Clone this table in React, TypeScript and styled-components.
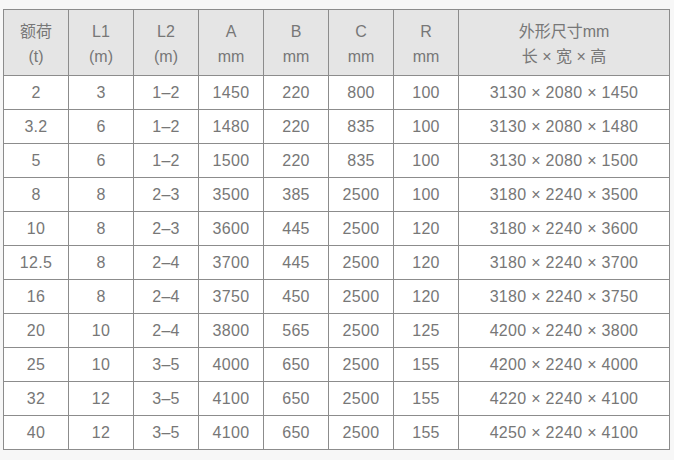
import React from 'react';
import styled, {createGlobalStyle} from 'styled-components';

const GlobalStyle = createGlobalStyle`
    html, body {
        margin: 0;
        padding: 0;
        background: #f7f7f7;
    }
`;

const Page = styled.div`
    width: 674px;
    height: 460px;
    padding: 9px 0 0 3px;
    box-sizing: border-box;
    font-family: "Liberation Sans", "Noto Sans CJK SC", sans-serif;
    color: #777;
`;

const Table = styled.table`
    border-collapse: collapse;
    table-layout: fixed;
    width: 666px;
    background: #fff;
    font-size: 16px;
`;

const HeadCell = styled.th`
    height: 62px;
    padding: 3px 0 0;
    border: 1px solid #8c8c8c;
    background: #e5e5e5;
    font-weight: normal;
    text-align: center;
    line-height: 25px;
    vertical-align: middle;
`;

const Cell = styled.td`
    height: 33px;
    padding: 0;
    border: 1px solid #8c8c8c;
    text-align: center;
    vertical-align: middle;
    letter-spacing: 0.3px;
`;

type Column = {
    top: string;
    bottom: string;
    width: number;
};

const columns: Column[] = [
    {top: '额荷', bottom: '(t)', width: 65},
    {top: 'L1', bottom: '(m)', width: 65},
    {top: 'L2', bottom: '(m)', width: 65},
    {top: 'A', bottom: 'mm', width: 65},
    {top: 'B', bottom: 'mm', width: 65},
    {top: 'C', bottom: 'mm', width: 65},
    {top: 'R', bottom: 'mm', width: 65},
    {top: '外形尺寸mm', bottom: '长 × 宽 × 高', width: 211},
];

const rows: string[][] = [
    ['2', '3', '1–2', '1450', '220', '800', '100', '3130 × 2080 × 1450'],
    ['3.2', '6', '1–2', '1480', '220', '835', '100', '3130 × 2080 × 1480'],
    ['5', '6', '1–2', '1500', '220', '835', '100', '3130 × 2080 × 1500'],
    ['8', '8', '2–3', '3500', '385', '2500', '100', '3180 × 2240 × 3500'],
    ['10', '8', '2–3', '3600', '445', '2500', '120', '3180 × 2240 × 3600'],
    ['12.5', '8', '2–4', '3700', '445', '2500', '120', '3180 × 2240 × 3700'],
    ['16', '8', '2–4', '3750', '450', '2500', '120', '3180 × 2240 × 3750'],
    ['20', '10', '2–4', '3800', '565', '2500', '125', '4200 × 2240 × 3800'],
    ['25', '10', '3–5', '4000', '650', '2500', '155', '4200 × 2240 × 4000'],
    ['32', '12', '3–5', '4100', '650', '2500', '155', '4220 × 2240 × 4100'],
    ['40', '12', '3–5', '4100', '650', '2500', '155', '4250 × 2240 × 4100'],
];

const App = () => {
    return (
        <Page>
            <GlobalStyle/>
            <Table>
                <colgroup>
                    {columns.map((c, i) => <col key={i} style={{width: c.width}}/>)}
                </colgroup>
                <thead>
                    <tr>
                        {columns.map((c, i) => (
                            <HeadCell key={i}>{c.top}<br/>{c.bottom}</HeadCell>
                        ))}
                    </tr>
                </thead>
                <tbody>
                    {rows.map((row, r) => (
                        <tr key={r}>
                            {row.map((value, i) => <Cell key={i}>{value}</Cell>)}
                        </tr>
                    ))}
                </tbody>
            </Table>
        </Page>
    );
};

export default App;
